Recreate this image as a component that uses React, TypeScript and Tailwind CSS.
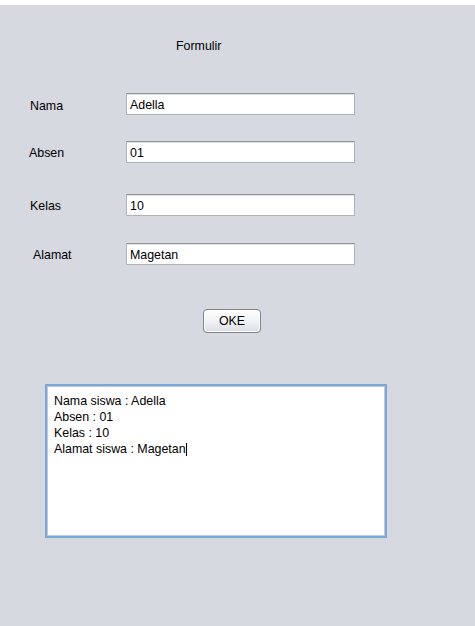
import React from 'react';

const fields = [
    { label: 'Nama', value: 'Adella', labelPad: 'pl-[30px] mt-[4px]', gap: 'mt-[39px]' },
    { label: 'Absen', value: '01', labelPad: 'pl-[29px] mt-[2px]', gap: 'mt-[26px]' },
    { label: 'Kelas', value: '10', labelPad: 'pl-[30px] mt-[2px]', gap: 'mt-[31px]' },
    { label: 'Alamat', value: 'Magetan', labelPad: 'pl-[33px] mt-[2px]', gap: 'mt-[27px]' },
];

export default function App() {
    return (
        <div className="w-[475px] h-[626px] bg-[#d6d9df] text-[12.4px] leading-[15px] text-black font-['Liberation_Sans',Arial,sans-serif] overflow-hidden">
            <div className="h-[5px] bg-white" />

            {/* judul */}
            <div className="mt-[34px] pl-[176px]">Formulir</div>

            {fields.map((f) => (
                <div key={f.label} className={`flex items-center h-[22px] ${f.gap}`}>
                    <div className={`w-[126px] ${f.labelPad}`}>{f.label}</div>
                    <div className="w-[229px] h-[22px] bg-white border border-[#b0b3b9] border-t-[#8f9298] shadow-[inset_0_1px_0_#dfe1e5] flex items-center pl-[3px] pt-[2px]">
                        {f.value}
                    </div>
                </div>
            ))}

            <div className="mt-[44px] pl-[203px]">
                <button className="w-[58px] h-[24px] rounded-[4px] border border-[#80848b] bg-gradient-to-b from-white via-[#f2f3f5] to-[#d9dde3] flex items-center justify-center shadow-[inset_0_0_0_1px_#ffffff]">
                    OKE
                </button>
            </div>

            <div className="mt-[51px] ml-[45px] w-[342px] h-[154px] bg-white border-2 border-[#7ea6d3] shadow-[inset_0_0_0_1px_#b7cde8] pl-[7px] pt-[7px] leading-[16px]">
                <div>Nama siswa : Adella</div>
                <div>Absen : 01</div>
                <div>Kelas : 10</div>
                <div className="flex items-center">
                    Alamat siswa : Magetan
                    <span className="inline-block w-px h-[13px] bg-black" />
                </div>
            </div>
        </div>
    );
}
